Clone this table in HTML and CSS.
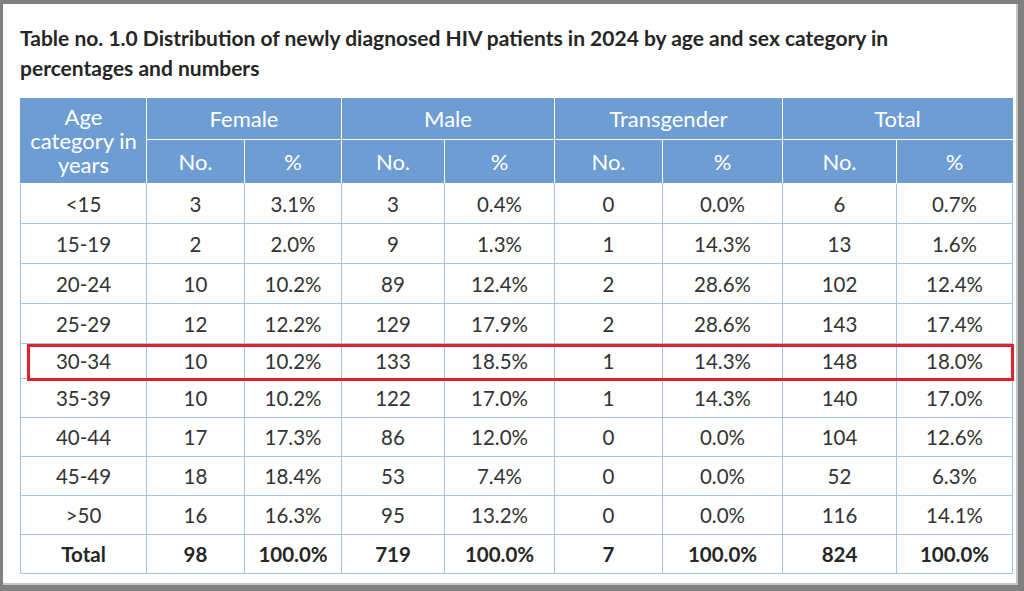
FILE: index.html
```html
<!DOCTYPE html>
<html lang="en">
<head>
<meta charset="utf-8">
<title>Table no. 1.0</title>
<link rel="stylesheet" href="styles.css">
</head>
<body>
<div class="frame">
  <div class="page">
    <h1 class="title">Table no. 1.0 Distribution of newly diagnosed HIV patients in 2024 by age and sex category in percentages and numbers</h1>
    <table class="data">
      <colgroup>
        <col class="c-age"><col class="c-fn"><col class="c-fp"><col class="c-mn"><col class="c-mp"><col class="c-tn"><col class="c-tp"><col class="c-sn"><col class="c-sp">
      </colgroup>
      <thead>
        <tr class="h1">
          <th rowspan="2" class="age-head">Age<br>category in<br>years</th>
          <th colspan="2">Female</th>
          <th colspan="2">Male</th>
          <th colspan="2">Transgender</th>
          <th colspan="2">Total</th>
        </tr>
        <tr class="h2">
          <th>No.</th><th>%</th>
          <th>No.</th><th>%</th>
          <th>No.</th><th>%</th>
          <th>No.</th><th>%</th>
        </tr>
      </thead>
      <tbody>
        <tr class="r-tall"><td>&lt;15</td><td>3</td><td>3.1%</td><td>3</td><td>0.4%</td><td>0</td><td>0.0%</td><td>6</td><td>0.7%</td></tr>
        <tr class="r-tall"><td>15-19</td><td>2</td><td>2.0%</td><td>9</td><td>1.3%</td><td>1</td><td>14.3%</td><td>13</td><td>1.6%</td></tr>
        <tr class="r-tall"><td>20-24</td><td>10</td><td>10.2%</td><td>89</td><td>12.4%</td><td>2</td><td>28.6%</td><td>102</td><td>12.4%</td></tr>
        <tr class="r-tall"><td>25-29</td><td>12</td><td>12.2%</td><td>129</td><td>17.9%</td><td>2</td><td>28.6%</td><td>143</td><td>17.4%</td></tr>
        <tr class="r-short"><td>30-34</td><td>10</td><td>10.2%</td><td>133</td><td>18.5%</td><td>1</td><td>14.3%</td><td>148</td><td>18.0%</td></tr>
        <tr class="r-mid"><td>35-39</td><td>10</td><td>10.2%</td><td>122</td><td>17.0%</td><td>1</td><td>14.3%</td><td>140</td><td>17.0%</td></tr>
        <tr class="r-mid"><td>40-44</td><td>17</td><td>17.3%</td><td>86</td><td>12.0%</td><td>0</td><td>0.0%</td><td>104</td><td>12.6%</td></tr>
        <tr class="r-mid"><td>45-49</td><td>18</td><td>18.4%</td><td>53</td><td>7.4%</td><td>0</td><td>0.0%</td><td>52</td><td>6.3%</td></tr>
        <tr class="r-mid"><td>&gt;50</td><td>16</td><td>16.3%</td><td>95</td><td>13.2%</td><td>0</td><td>0.0%</td><td>116</td><td>14.1%</td></tr>
        <tr class="r-mid total"><td>Total</td><td>98</td><td>100.0%</td><td>719</td><td>100.0%</td><td>7</td><td>100.0%</td><td>824</td><td>100.0%</td></tr>
      </tbody>
    </table>
    <div class="highlight" aria-hidden="true"></div>
  </div>
</div>
</body>
</html>
```
FILE: styles.css
```css
* { box-sizing: border-box; }
html, body { margin: 0; padding: 0; background: #808080; }
body { font-family: Lato, "Open Sans", "Liberation Sans", sans-serif; }

.frame {
  width: 1024px;
  height: 591px;
  border-style: solid;
  border-color: #808080;
  border-width: 4px 6px 6px 3px;
}
.page {
  position: relative;
  width: 100%;
  height: 100%;
  background: #ffffff;
  border-right: 2px solid #c4c4c4;
  border-bottom: 2px solid #c4c4c4;
  padding: 19px 0 0 17px;
}
.title {
  margin: 0 0 15px 0;
  font-size: 21px;
  line-height: 30px;
  font-weight: 700;
  color: #262626;
  width: 900px;
}

.data {
  border-collapse: collapse;
  table-layout: fixed;
  width: 992px;
  font-size: 20.5px;
  color: #333333;
}
.c-age { width: 126px; }
.c-fn { width: 98px; }
.c-fp { width: 97px; }
.c-mn { width: 103px; }
.c-mp { width: 110px; }
.c-tn { width: 108px; }
.c-tp { width: 120px; }
.c-sn { width: 114px; }
.c-sp { width: 116px; }

.data th {
  background: #6d9dd3;
  color: #ffffff;
  font-size: 22px;
  font-weight: 400;
  border: 1px solid #ffffff;
  text-align: center;
  vertical-align: middle;
  padding: 0;
  line-height: 24px;
}
.data thead tr:first-child th { border-top-color: #6d9dd3; }
.data thead th:first-child { border-left-color: #6d9dd3; }
.data thead tr.h1 th:last-child { border-right-color: #6d9dd3; }
.data thead tr.h2 th:last-child { border-right-color: #6d9dd3; }
.h1 { height: 41px; }
.h2 { height: 44px; }
.age-head { line-height: 24px; }

.data td {
  border: 1px solid #a3c4e8;
  text-align: center;
  vertical-align: middle;
  padding: 0;
  line-height: 22px;
}
.r-tall { height: 40px; }
.r-short { height: 35px; }
.r-mid { height: 39px; }
.total td { font-weight: 700; color: #262626; }

.highlight {
  position: absolute;
  left: 24px;
  top: 340px;
  width: 987px;
  height: 37px;
  border: 3px solid #e3202a;
  pointer-events: none;
}
```
